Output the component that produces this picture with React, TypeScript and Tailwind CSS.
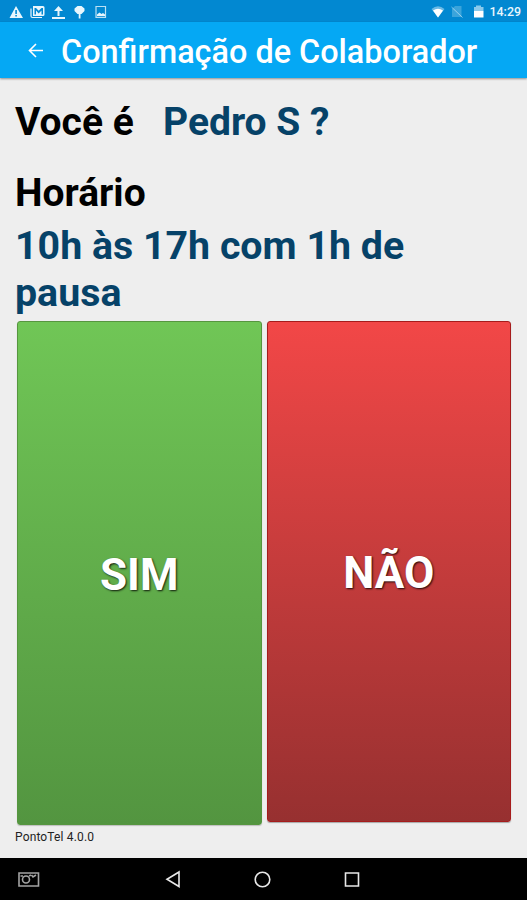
interface ActionButtonProps {
  label: string
  className: string
}

const StatusBar = () => (
  <div className="flex h-[22px] shrink-0 items-center bg-[#0288d1] text-[#e8f6fd]">
    <svg width="527" height="22" viewBox="0 0 527 22" fill="currentColor">
      {/* Warning */}
      <path fillRule="evenodd" d="M16 6L23 18H9.500ZM15.300 10V14H16.900V10ZM15.300 15V16.500H16.900V15Z" />
      {/* Mail stack */}
      <path fillRule="evenodd" d="M33 6H43Q44.500 6 44.500 7.500V14.500Q44.500 16 43 16H33Z M34.500 8V14.500H36V10.500L38.700 13.500L41.500 10.500V14.500H43V8H41.500L38.700 10.800L36 8Z" />
      <path d="M31 8.500V16Q31 17.500 32.500 17.500H42" fill="none" stroke="currentColor" strokeWidth="1.200" />
      {/* Upload */}
      <path d="M58.500 6L63 11H59.500V16H57.500V11H54ZM52 17H65V19H52Z" />
      {/* Pin */}
      <path d="M77.500 6H81.500L84.500 8.500V11L81.500 14H77.500L74.500 11V8.500ZM78.700 14H80.500V18.500H78.700Z" />
      {/* Picture */}
      <path d="M96 6.500H105.500V17.300H96Z" fill="none" stroke="currentColor" strokeWidth="1.200" opacity=".8" />
      <path d="M97 14.500L99.500 12.500L101.500 14L103 13L105 14.500V16H97Z" />
      {/* Wifi */}
      <path d="M431.500 9Q438 3.500 444.500 9L438 17.500Z" opacity=".45" />
      <path d="M433 10.500Q438 7 443 10.500L438 17.500Z" fill="#fff" />
      {/* No SIM */}
      <path d="M455 6H461.500V17H452V9Z" opacity=".25" />
      <path d="M451.500 7L462.500 17.500" fill="none" stroke="currentColor" opacity=".55" />
      {/* Battery */}
      <path d="M476 5.500H481V7H483.500V11H474V7H476Z" opacity=".6" />
      <path d="M474 11H483.500V17.500H474Z" fill="#fff" />
      <text x="489.500" y="16.300" textLength="31.500" lengthAdjust="spacingAndGlyphs" className="font-['Roboto',sans-serif] text-[12px] font-medium">
        14:29
      </text>
    </svg>
  </div>
)

const TitleBar = () => (
  <header className="z-10 flex h-[56px] shrink-0 items-center bg-[#05a8f4] pl-[28px] text-white shadow-[0_1px_2px_rgba(0,0,0,0.4)]">
    <svg width="16" height="16" viewBox="0 0 16 16" fill="none" stroke="currentColor" strokeWidth="1.600">
      <path d="M15 8.500H2M8 2L1.500 8.500L8 15" />
    </svg>
    <h1 className="ml-[17px] pt-[3px] text-[32.4px] leading-[40px] font-medium whitespace-nowrap">
      Confirmação de Colaborador
    </h1>
  </header>
)

const ActionButton = ({ label, className }: ActionButtonProps) => (
  <button
    className={`flex flex-1 items-center justify-center rounded-[3px] border pt-[3px] text-[44px] leading-[50px] font-bold text-white [text-shadow:1px_1px_2px_rgba(0,0,0,0.85)] ${className}`}
  >
    {label}
  </button>
)

const NavigationBar = () => (
  <nav className="h-[42px] shrink-0 bg-black">
    <svg width="527" height="42" viewBox="0 0 527 42" fill="none" stroke="#e8e8e8" strokeWidth="1.600">
      {/* Screenshot */}
      <g stroke="#a3a3a3" strokeWidth="1.600">
        <path d="M19 15H38.500V28H19Z" />
        <circle cx="26" cy="21.500" r="3.500" />
        <path d="M20.500 18H23M29 18L31 17M31.500 17L33 19L36 17" />
      </g>
      <path d="M179 14V28.500L167 21.300Z" />
      <circle cx="262.500" cy="21.500" r="7.300" />
      <path d="M345.500 15H358.500V28H345.500Z" />
    </svg>
  </nav>
)

export default function App() {
  return (
    <div className="flex h-[900px] w-[527px] flex-col overflow-hidden bg-[#eeeeee] font-['Roboto',sans-serif]">
      <StatusBar />
      <TitleBar />
      <main className="flex flex-1 flex-col pl-[15px]">
        <div className="mt-[21px] flex text-[39px] leading-[47px] font-bold whitespace-nowrap">
          <span className="w-[148px] text-black">Você é</span>
          <span className="text-[#064268]">Pedro S ?</span>
        </div>
        <h2 className="mt-[24px] text-[39px] leading-[47px] font-bold text-black">Horário</h2>
        <p className="mt-[6px] text-[39.35px] leading-[47px] font-bold text-[#064268]">
          10h às 17h com 1h de
          <br />
          pausa
        </p>
        <div className="mt-[4px] ml-[2px] flex h-[504px] w-[494px] gap-[5px]">
          <ActionButton
            label="SIM"
            className="border-[#56963f] bg-linear-to-b from-[#70c656] to-[#539540] shadow-[0_1px_1px_rgba(0,0,0,0.2)]"
          />
          <ActionButton
            label="NÃO"
            className="mb-[3px] border-[#a61c1c] bg-linear-to-b from-[#f24747] to-[#973030] shadow-[0_1px_1px_rgba(0,0,0,0.3)]"
          />
        </div>
        <footer className="mt-[5px] text-[12px] leading-[14px] tracking-[0.15px] text-[#222]">PontoTel 4.0.0</footer>
      </main>
      <NavigationBar />
    </div>
  )
}
